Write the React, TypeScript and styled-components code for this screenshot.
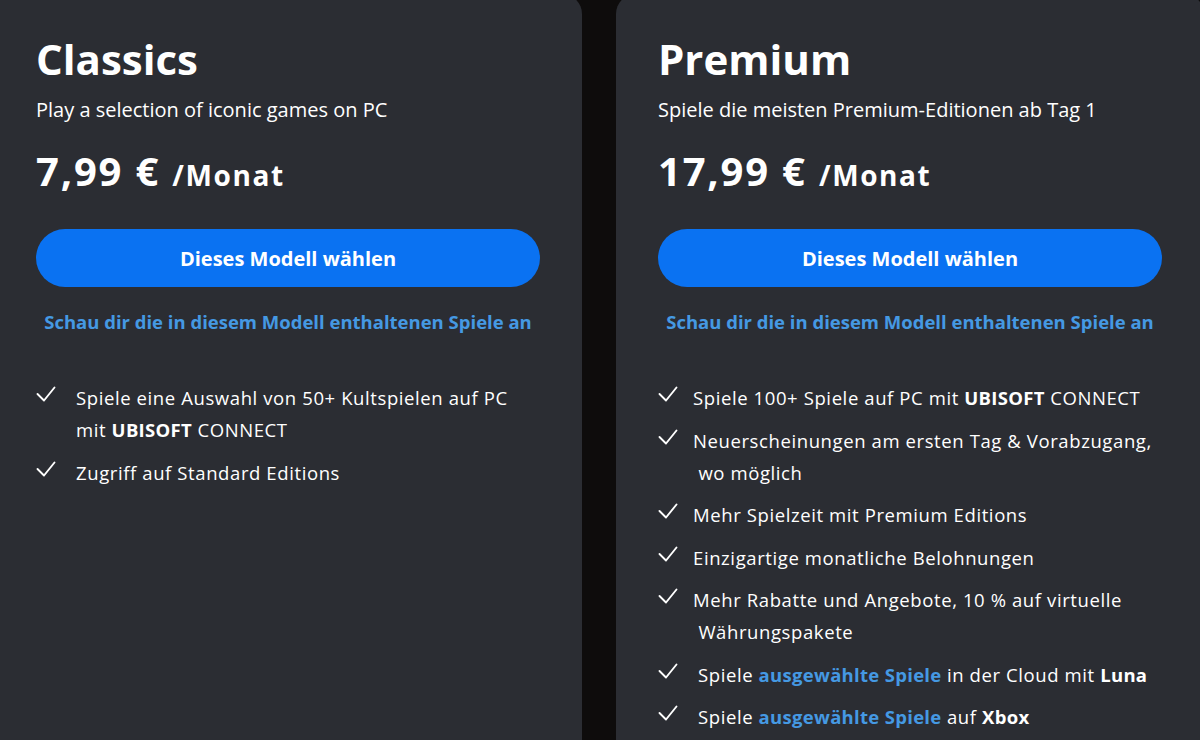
import React from 'react';
import styled, { createGlobalStyle } from 'styled-components';

const GlobalStyle = createGlobalStyle`
  html, body {
    margin: 0;
    padding: 0;
    background-color: #0e0c0c;
    overflow: hidden;
  }
  body {
    font-family: 'Open Sans', 'Noto Sans', sans-serif;
    color: #fff;
  }
`;

const Plans = styled.div`
  display: flex;
  gap: 34px;
  margin: -6px 0 0 -6px;
  height: 760px;
`;

const Card = styled.section`
  width: 588px;
  flex-shrink: 0;
  box-sizing: border-box;
  padding: 40px 42px 0;
  background-color: #2b2d33;
  border-radius: 20px 20px 0 0;
`;

const Title = styled.h2`
  margin: 0;
  font-size: 42px;
  font-weight: 700;
  line-height: 50px;
`;

const Subtitle = styled.p`
  margin: 13px 0 0;
  font-size: 20px;
  line-height: 26px;
`;

const Price = styled.div`
  margin-top: 24px;
  font-size: 40px;
  font-weight: 700;
  line-height: 48px;
  letter-spacing: 1.8px;

  span {
    font-size: 28px;
    letter-spacing: 1.6px;
  }
`;

const ChooseButton = styled.button`
  display: block;
  width: 100%;
  height: 58px;
  margin-top: 30px;
  border: none;
  border-radius: 29px;
  background-color: #0a72f2;
  color: #fff;
  font-family: inherit;
  font-size: 20px;
  font-weight: 700;
  cursor: pointer;
`;

const GamesLink = styled.a`
  display: block;
  margin-top: 23px;
  text-align: center;
  color: #4599e3;
  font-size: 18.5px;
  font-weight: 700;
  line-height: 24px;
  text-decoration: none;
`;

const Features = styled.ul`
  list-style: none;
  margin: 48px 0 0;
  padding: 0;
  display: flex;
  flex-direction: column;
  gap: 10.5px;
`;

const Feature = styled.li<{ $indent?: number }>`
  display: flex;
  align-items: flex-start;
  font-size: 18.5px;
  letter-spacing: 0.6px;
  line-height: 32px;

  svg {
    flex-shrink: 0;
    margin-top: 4px;
  }

  div {
    margin-left: ${(p) => 20 + (p.$indent ?? 0)}px;
  }

  b {
    font-weight: 700;
    letter-spacing: 0.3px;
  }
`;

const Hl = styled.b`
  color: #4599e3;
`;

const Brand = () => (
  <>
    <b>UBISOFT</b> CONNECT
  </>
);

const Check = () => (
  <svg width="20" height="16" viewBox="0 0 20 16">
    <polyline
      points="1.5,8 8,14.5 18.5,1.5"
      fill="none"
      stroke="#fff"
      strokeWidth="1.9"
      strokeLinecap="round"
      strokeLinejoin="round"
    />
  </svg>
);

type Item = { content: React.ReactNode; indent?: number };

const classics: Item[] = [
  {
    content: (
      <>
        Spiele eine Auswahl von 50+ Kultspielen auf PC
        <br />
        mit <Brand />
      </>
    ),
  },
  { content: 'Zugriff auf Standard Editions' },
];

const premium: Item[] = [
  {
    content: (
      <>
        Spiele 100+ Spiele auf PC mit <Brand />
      </>
    ),
    indent: -5,
  },
  {
    content: (
      <>
        Neuerscheinungen am ersten Tag &amp; Vorabzugang,
        <br />
        &nbsp;wo möglich
      </>
    ),
    indent: -5,
  },
  { content: 'Mehr Spielzeit mit Premium Editions', indent: -5 },
  { content: 'Einzigartige monatliche Belohnungen', indent: -5 },
  {
    content: (
      <>
        Mehr Rabatte und Angebote, 10 % auf virtuelle
        <br />
        &nbsp;Währungspakete
      </>
    ),
    indent: -5,
  },
  {
    content: (
      <>
        Spiele <Hl>ausgewählte Spiele</Hl> in der Cloud mit <b>Luna</b>
      </>
    ),
  },
  {
    content: (
      <>
        Spiele <Hl>ausgewählte Spiele</Hl> auf <b>Xbox</b>
      </>
    ),
  },
];

type PlanProps = {
  title: string;
  subtitle: string;
  price: string;
  items: Item[];
};

const Plan = ({ title, subtitle, price, items }: PlanProps) => (
  <Card>
    <Title>{title}</Title>
    <Subtitle>{subtitle}</Subtitle>
    <Price>
      {price} <span>/Monat</span>
    </Price>
    <ChooseButton type="button">Dieses Modell wählen</ChooseButton>
    <GamesLink href="#">Schau dir die in diesem Modell enthaltenen Spiele an</GamesLink>
    <Features>
      {items.map((item, i) => (
        <Feature key={i} $indent={item.indent}>
          <Check />
          <div>{item.content}</div>
        </Feature>
      ))}
    </Features>
  </Card>
);

export default function App() {
  return (
    <>
      <GlobalStyle />
      <Plans>
        <Plan
          title="Classics"
          subtitle="Play a selection of iconic games on PC"
          price="7,99 €"
          items={classics}
        />
        <Plan
          title="Premium"
          subtitle="Spiele die meisten Premium-Editionen ab Tag 1"
          price="17,99 €"
          items={premium}
        />
      </Plans>
    </>
  );
}
